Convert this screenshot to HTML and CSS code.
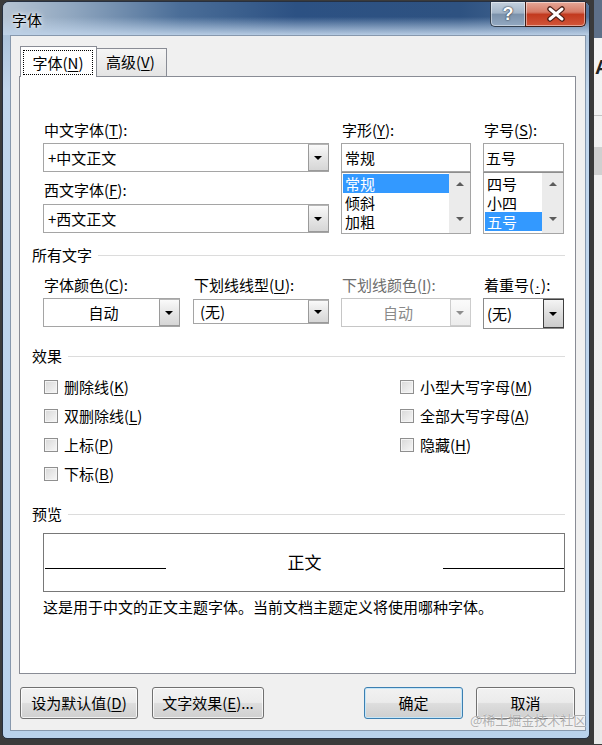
FILE: index.html
```html
<!DOCTYPE html>
<html lang="zh-CN">
<head>
    <meta charset="UTF-8">
    <title>字体</title>
    <link rel="stylesheet" href="styles.css">
</head>
<body>
<div class="desktop">

    <div class="window">
        <!-- Title bar with help and close buttons -->
        <div class="titlebar">
            <span class="title">字体</span>
            <div class="caption-buttons">
                <span class="caption-btn help-btn">?</span>
                <span class="caption-btn close-btn">
                    <svg width="22" height="16" viewBox="0 0 22 16">
                        <path d="M5 3 L17 13 M17 3 L5 13" stroke="#4a1d15" stroke-width="5.5" stroke-linecap="round" fill="none"/>
                        <path d="M5 3 L17 13 M17 3 L5 13" stroke="#ffffff" stroke-width="3" stroke-linecap="round" fill="none"/>
                    </svg>
                </span>
            </div>
        </div>

        <div class="frame">
            <div class="client">

                <div class="tabs">
                    <div class="tab active"><span class="focus-rect">字体(<u>N</u>)</span></div>
                    <div class="tab">高级(<u>V</u>)</div>
                </div>

                <div class="panel">
                    <!-- Font name / style / size -->
                    <div class="font-grid">
                        <div class="col col-name">
                            <div class="label">中文字体(<u>T</u>):</div>
                            <div class="combo"><span class="combo-text">+中文正文</span><span class="drop-btn"></span></div>
                            <div class="label label-second">西文字体(<u>F</u>):</div>
                            <div class="combo combo-second"><span class="combo-text">+西文正文</span><span class="drop-btn"></span></div>
                        </div>
                        <div class="col col-style">
                            <div class="label">字形(<u>Y</u>):</div>
                            <div class="edit">常规</div>
                            <div class="listbox">
                                <div class="items">
                                    <div class="item selected">常规</div>
                                    <div class="item">倾斜</div>
                                    <div class="item">加粗</div>
                                </div>
                                <div class="scrollbar"><span class="arrow-up"></span><span class="arrow-down"></span></div>
                            </div>
                        </div>
                        <div class="col col-size">
                            <div class="label">字号(<u>S</u>):</div>
                            <div class="edit">五号</div>
                            <div class="listbox">
                                <div class="items">
                                    <div class="item">四号</div>
                                    <div class="item">小四</div>
                                    <div class="item selected">五号</div>
                                </div>
                                <div class="scrollbar"><span class="arrow-up"></span><span class="arrow-down"></span></div>
                            </div>
                        </div>
                    </div>

                    <div class="section section-all">所有文字</div>

                    <div class="color-grid">
                        <div class="col col-color">
                            <div class="label">字体颜色(<u>C</u>):</div>
                            <div class="combo"><span class="combo-text centered">自动</span><span class="drop-btn"></span></div>
                        </div>
                        <div class="col col-underline">
                            <div class="label">下划线线型(<u>U</u>):</div>
                            <div class="combo combo-short"><span class="combo-text">(无)</span><span class="drop-btn"></span></div>
                        </div>
                        <div class="col col-ulcolor">
                            <div class="label disabled">下划线颜色(<u>I</u>):</div>
                            <div class="combo combo-disabled"><span class="combo-text centered">自动</span><span class="drop-btn"></span></div>
                        </div>
                        <div class="col col-emphasis">
                            <div class="label">着重号(<u class="dot">·</u>):</div>
                            <div class="combo combo-hot"><span class="combo-text">(无)</span><span class="drop-btn"></span></div>
                        </div>
                    </div>

                    <div class="section section-effects">效果</div>

                    <div class="effects">
                        <div class="check-col check-col-left">
                            <div class="check"><span class="box"></span>删除线(<u>K</u>)</div>
                            <div class="check"><span class="box"></span>双删除线(<u>L</u>)</div>
                            <div class="check"><span class="box"></span>上标(<u>P</u>)</div>
                            <div class="check"><span class="box"></span>下标(<u>B</u>)</div>
                        </div>
                        <div class="check-col">
                            <div class="check"><span class="box"></span>小型大写字母(<u>M</u>)</div>
                            <div class="check"><span class="box"></span>全部大写字母(<u>A</u>)</div>
                            <div class="check"><span class="box"></span>隐藏(<u>H</u>)</div>
                        </div>
                    </div>

                    <div class="section section-preview">预览</div>

                    <div class="preview">
                        <span class="preview-line"></span>
                        <span class="preview-text">正文</span>
                        <span class="preview-line"></span>
                    </div>

                    <div class="note">这是用于中文的正文主题字体。当前文档主题定义将使用哪种字体。</div>
                </div>

                <!-- Dialog buttons -->
                <div class="footer">
                    <div class="btn-group btn-group-left">
                        <button class="btn btn-default-value">设为默认值(<u>D</u>)</button>
                        <button class="btn btn-effects">文字效果(<u>E</u>)...</button>
                    </div>
                    <div class="btn-group btn-group-right">
                        <button class="btn btn-ok">确定</button>
                        <button class="btn btn-cancel">取消</button>
                    </div>
                </div>

            </div>
        </div>
    </div>

    <!-- Edge of the Word window behind the dialog -->
    <div class="app-strip">
        <span class="app-glyph">A</span>
        <span class="app-rule"></span>
        <span class="app-band"></span>
    </div>

    <div class="watermark">@稀土掘金技术社区</div>
</div>
</body>
</html>
```

FILE: styles.css
```css
* {
    box-sizing: border-box;
}
body {
    margin: 0;
    width: 602px;
    height: 745px;
    overflow: hidden;
    background-color: #3b3b3b;
    font-family: "Noto Sans CJK SC", "Microsoft YaHei", sans-serif;
    font-size: 15px;
    line-height: 20px;
    color: #000;
}
u {
    text-underline-offset: 2px;
}
/* the emphasis dot is a narrow latin glyph in the original */
u.dot {
    font-family: "Liberation Sans", Arial, sans-serif;
    padding: 0 1px;
}
.desktop {
    position: relative;
    display: flex;
    height: 745px;
    padding: 1px 0 0 2px;
}

/* Window frame */
.window {
    width: 588px;
    height: 738px;
    display: flex;
    flex-direction: column;
    border: 1px solid #263041;
    border-radius: 7px 7px 5px 5px;
    background: linear-gradient(to bottom, #9fb7d0, #c1d6ec 12%, #b9d2ec 100%);
}
.titlebar {
    height: 33px;
    display: flex;
    justify-content: space-between;
    padding-left: 9px;
    border-radius: 6px 6px 0 0;
    background:
        linear-gradient(to bottom, rgba(255, 255, 255, 0) 45%, rgba(190, 210, 232, 0.95) 100%),
        linear-gradient(to right, #b6c4d3 0%, #8fa6bf 12%, #4b6e98 30%, #2c5183 50%, #2e5281 78%, #52729a 100%);
}
.title {
    margin-top: 8px;
    text-shadow: 0 0 6px rgba(255, 255, 255, 0.9), 0 0 3px rgba(255, 255, 255, 0.9);
}
.caption-buttons {
    display: flex;
    height: 25px;
    margin-right: 3px;
}
.caption-btn {
    display: flex;
    align-items: center;
    justify-content: center;
    height: 25px;
    border: 1px solid #34404f;
    border-top: none;
    box-shadow: inset 0 0 0 1px rgba(255, 255, 255, 0.45);
}
.help-btn {
    width: 35px;
    border-right: none;
    border-radius: 0 0 0 5px;
    background: linear-gradient(to bottom, #c5d1de 0%, #a3b5c8 45%, #7c92ab 52%, #93a9c2 100%);
    font-family: "Liberation Sans", Arial, sans-serif;
    font-weight: bold;
    font-size: 18px;
    color: #fff;
    text-shadow: 0 0 2px #2a3442, 0 0 1px #2a3442;
}
.close-btn {
    width: 61px;
    border-color: #3e1c16;
    border-radius: 0 0 5px 0;
    background: linear-gradient(to bottom, #e6a898 0%, #d67a66 42%, #c23a1f 52%, #d2563a 100%);
}

.frame {
    flex: 1;
    padding: 0 3px 7px 7px;
}
.client {
    height: 100%;
    display: flex;
    flex-direction: column;
    padding: 10px 9px 0 8px;
    background-color: #f0f0f0;
    border: 1px solid #8798ad;
}

/* Tabs */
.tabs {
    display: flex;
    align-items: flex-end;
    height: 31px;
    margin-left: 1px;
    margin-bottom: -1px;
    position: relative;
    z-index: 1;
}
.tab {
    border: 1px solid #898c95;
    border-bottom: none;
}
.tab.active {
    width: 77px;
    height: 31px;
    padding: 3px 3px 0 2px;
    background-color: #fff;
    position: relative;
    z-index: 2;
}
.focus-rect {
    display: block;
    height: 25px;
    line-height: 23px;
    border: 1px dotted #000;
    text-align: center;
}
.tab:not(.active) {
    width: 71px;
    height: 28px;
    margin-left: -1px;
    margin-bottom: 1px;
    padding-left: 9px;
    line-height: 26px;
    background: linear-gradient(to bottom, #f5f5f5, #e4e4e4);
}

.panel {
    height: 598px;
    padding: 0 10px 0 11px;
    background-color: #fff;
    border: 1px solid #898c95;
}

/* Shared control styles */
.col {
    display: flex;
    flex-direction: column;
}
.label {
    height: 20px;
    padding-left: 1px;
    white-space: nowrap;
}
.label.disabled {
    color: #6d6d6d;
}
.combo {
    display: flex;
    height: 29px;
    margin-top: 3px;
    border: 1px solid #a5a5a5;
    background-color: #fff;
}
.combo-text {
    flex: 1;
    padding-left: 4px;
    line-height: 27px;
    white-space: nowrap;
}
.combo-text.centered {
    text-align: center;
}
.drop-btn {
    position: relative;
    width: 21px;
    margin: 0 -1px 0 0;
    border: 1px solid #9a9a9a;
    border-top-color: #b5b5b5;
    background: linear-gradient(to bottom, #fafafa, #e6e6e6 50%, #d6d6d6 100%);
}
.drop-btn::after {
    content: "";
    position: absolute;
    left: 5px;
    top: 11px;
    border-left: 4px solid transparent;
    border-right: 4px solid transparent;
    border-top: 4px solid #000;
}
.edit {
    height: 29px;
    margin-top: 3px;
    padding-left: 3px;
    line-height: 27px;
    border: 1px solid #a5a5a5;
}
.listbox {
    display: flex;
    height: 62px;
    border: 1px solid #a5a5a5;
    border-top-color: #8e8e8e;
}
.items {
    flex: 1;
    padding: 1px 0 0 1px;
    overflow: hidden;
}
.item {
    height: 19px;
    line-height: 19px;
    padding-left: 2px;
}
.item.selected {
    background-color: #3399ff;
    color: #fff;
}
.scrollbar {
    width: 21px;
    display: flex;
    flex-direction: column;
    align-items: center;
    justify-content: space-between;
    padding: 9px 0 12px;
    background-color: #ebebeb;
}
.arrow-up {
    border-left: 4px solid transparent;
    border-right: 4px solid transparent;
    border-bottom: 4px solid #5c5c5c;
}
.arrow-down {
    border-left: 4px solid transparent;
    border-right: 4px solid transparent;
    border-top: 4px solid #5c5c5c;
}

/* Font name / style / size */
.font-grid {
    display: flex;
    gap: 12px;
    margin: 43px 0 0 12px;
}
.col-name {
    width: 286px;
}
.label-second {
    margin-top: 8px;
}
.combo-second {
    margin-top: 4px;
}
.col-style {
    width: 130px;
}
.col-size {
    width: 81px;
}
.col-size .edit {
    padding-left: 2px;
}

/* Section headers with rule */
.section {
    display: flex;
    align-items: center;
    height: 20px;
    padding-left: 1px;
}
.section::after {
    content: "";
    flex: 1;
    height: 1px;
    margin-left: 6px;
    background-color: #dcdcdc;
}
.section-all {
    margin-top: 11px;
}
.section-effects {
    margin-top: 17px;
}
.section-preview {
    margin-top: 20px;
}

/* Colour / underline row */
.color-grid {
    display: flex;
    align-items: flex-start;
    gap: 12px;
    margin: 10px 0 0 12px;
}
.col-color {
    width: 137px;
    margin-right: 1px;
}
.col-underline {
    width: 136px;
}
.col-ulcolor {
    width: 130px;
}
.col-emphasis {
    width: 81px;
}
.col-emphasis .combo-text {
    padding-left: 3px;
}
.col-underline .combo-text {
    padding-left: 6px;
}
.combo-short {
    height: 25px;
    margin-top: 4px;
}
.combo-short .combo-text {
    line-height: 23px;
}
.combo-short .drop-btn::after {
    top: 9px;
}
.combo-disabled {
    border-color: #c6c6c6;
}
.combo-disabled .combo-text {
    color: #8a8a8a;
}
.combo-disabled .drop-btn {
    border-color: #cdcdcd;
    background: linear-gradient(to bottom, #fbfbfb, #ececec);
}
.combo-disabled .drop-btn::after {
    border-top-color: #8d8d8d;
}
.combo-hot {
    height: 31px;
    border-color: #8b8b8b;
}
.combo-hot .combo-text {
    line-height: 29px;
}
.combo-hot .drop-btn {
    border-color: #3f3f3f;
    background: linear-gradient(to bottom, #f4f4f4, #dedede 50%, #cbcbcb 100%);
}
.combo-hot .drop-btn::after {
    top: 12px;
}

/* Effect check boxes */
.effects {
    display: flex;
    margin: 11px 0 0 13px;
}
.check-col {
    display: flex;
    flex-direction: column;
    gap: 9px;
}
.check-col-left {
    width: 356px;
}
.check {
    display: flex;
    align-items: center;
    height: 20px;
    white-space: nowrap;
}
.box {
    width: 14px;
    height: 14px;
    margin-right: 6px;
    border: 1px solid #8f8f8f;
    background: linear-gradient(135deg, #d8d8d8, #f7f7f7);
    box-shadow: inset 0 0 0 1px #f4f4f4;
}

/* Preview */
.preview {
    display: flex;
    align-items: flex-start;
    height: 59px;
    margin: 9px 0 0 12px;
    padding: 18px 0 0 1px;
    border: 1px solid #787878;
}
.preview-line {
    width: 121px;
    height: 1px;
    margin-top: 16px;
    background-color: #000;
}
.preview-text {
    flex: 1;
    text-align: center;
    font-size: 17px;
}
.note {
    margin: 5px 0 0 12px;
    white-space: nowrap;
}

/* Dialog buttons */
.footer {
    display: flex;
    justify-content: space-between;
    margin: 13px 1px 0 1px;
}
.btn-group {
    display: flex;
}
.btn-group-left {
    gap: 14px;
}
.btn-group-right {
    gap: 13px;
}
.btn {
    height: 32px;
    padding: 0;
    font: inherit;
    color: #000;
    border: 1px solid #707070;
    border-radius: 3px;
    background: linear-gradient(to bottom, #f2f2f2 0%, #ebebeb 48%, #dddddd 52%, #cfcfcf 100%);
    box-shadow: inset 0 0 0 1px rgba(255, 255, 255, 0.75);
}
.btn-default-value {
    width: 118px;
}
.btn-effects {
    width: 112px;
}
.btn-ok, .btn-cancel {
    width: 99px;
}
.btn-ok {
    border-color: #3c7fb1;
    box-shadow: inset 0 0 0 1px #c5e6f8;
}

/* Word window behind the dialog */
.app-strip {
    width: 12px;
    height: 744px;
    margin-top: -1px;
    border-left: 4px solid #3a3a3a;
    background: linear-gradient(to bottom, #5e7088 0, #5e7088 38px, #f3f3f3 38px, #e9e9e9 100%);
    overflow: hidden;
}
.app-glyph {
    display: block;
    height: 20px;
    margin: 57px 0 0 1px;
    font-family: "Liberation Sans", Arial, sans-serif;
    font-weight: bold;
    font-size: 20px;
    color: #222;
}
.app-rule {
    display: block;
    height: 1px;
    margin-top: 38px;
    background-color: #c4c4c4;
}
.app-band {
    display: block;
    height: 28px;
    margin-top: 31px;
    background-color: #d0d0d0;
}

.watermark {
    position: absolute;
    left: 470px;
    top: 713px;
    font-size: 13px;
    line-height: 14px;
    color: rgba(160, 160, 160, 0.85);
    text-shadow: 0 0 1px #fff;
    white-space: nowrap;
}
```
